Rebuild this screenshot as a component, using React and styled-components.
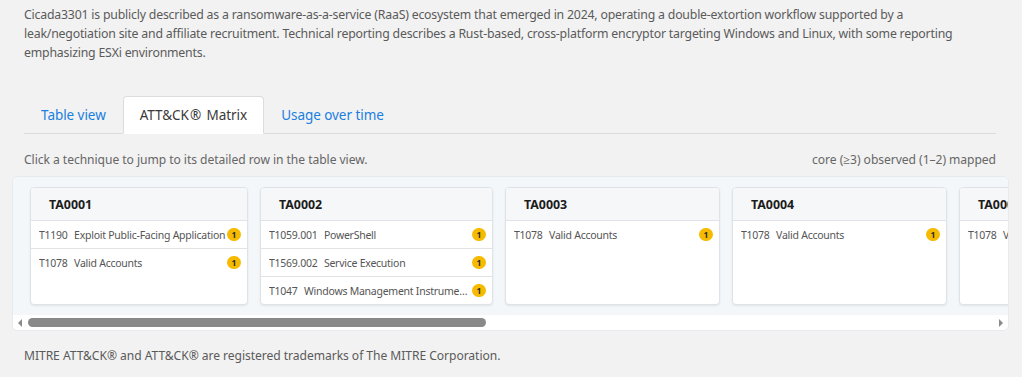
import React from 'react';
import styled, { createGlobalStyle } from 'styled-components';

const GlobalStyle = createGlobalStyle`
  html, body {
    margin: 0;
    padding: 0;
    background: #f2f2f2;
  }
  body {
    font-family: "Noto Sans", "Open Sans", sans-serif;
    color: #5b5b5b;
  }
`;

const Page = styled.div`
  padding: 5px 26px 0 24px;
  width: 1022px;
  box-sizing: border-box;
`;

const Intro = styled.p`
  margin: 0;
  font-size: 12.3px;
  letter-spacing: -0.2px;
  line-height: 19px;
  color: #5a5a5a;
`;

const Tabs = styled.div`
  display: flex;
  margin-top: 34px;
  border-bottom: 1px solid #dcdcdc;
`;

const Tab = styled.button`
  height: 38px;
  padding: 0 16px;
  margin-bottom: -1px;
  font: inherit;
  font-size: 13.5px;
  letter-spacing: -0.05px;
  background: ${({ active }) => (active ? '#fff' : 'transparent')};
  color: ${({ active }) => (active ? '#3a3a3a' : '#1a7fe0')};
  border: 1px solid ${({ active }) => (active ? '#dcdcdc' : 'transparent')};
  border-bottom-color: ${({ active }) => (active ? '#fff' : 'transparent')};
  border-radius: 4px 4px 0 0;
  cursor: pointer;
`;

const Reg = styled.span`
  margin: 0 2px 0 1px;
`;

const HintRow = styled.div`
  display: flex;
  justify-content: space-between;
  align-items: center;
  height: 18px;
  margin-top: 16px;
  font-size: 12.1px;
  letter-spacing: -0.05px;
  color: #666;
`;

const Matrix = styled.div`
  margin: 8px -13px 0 -12px;
  background: #fff;
  border: 1px solid #e6e9ed;
  border-radius: 6px;
  overflow: hidden;
`;

const Track = styled.div`
  display: flex;
  gap: 12px;
  padding: 10px 0 10px 17px;
  background: #f4f7fa;
  overflow: hidden;
`;

const Card = styled.div`
  flex: 0 0 ${({ width }) => width}px;
  background: #fff;
  border: 1px solid #dfe3e8;
  border-radius: 4px;
  box-shadow: 0 1px 2px rgba(0, 0, 0, 0.08);
  min-height: 113px;
  overflow: hidden;
`;

const CardHead = styled.div`
  height: 32px;
  display: flex;
  align-items: center;
  padding-left: 18px;
  background: #f5f7f9;
  border-bottom: 1px solid #dfe3e8;
  font-size: 12.4px;
  font-weight: 700;
  color: #1c1c1c;
`;

const Row = styled.div`
  display: flex;
  align-items: center;
  height: 27px;
  padding: 0 6px 0 8px;
  font-size: 10.5px;
  letter-spacing: -0.25px;
  color: #555;
  cursor: pointer;
  & + & {
    border-top: 1px solid #e3e3e3;
  }
`;

const RowText = styled.span`
  flex: 1;
  min-width: 0;
  white-space: nowrap;
  overflow: hidden;
  text-overflow: ${({ clip }) => (clip ? 'clip' : 'ellipsis')};
`;

const Code = styled.span`
  margin-right: 4px;
`;

const Badge = styled.span`
  flex: none;
  width: 14px;
  height: 13px;
  border-radius: 7px;
  background: #f6bb00;
  color: #2a2a2a;
  font-size: 8.5px;
  font-weight: 700;
  letter-spacing: 0;
  display: flex;
  align-items: center;
  justify-content: center;
  margin-left: 1px;
`;

const Scrollbar = styled.div`
  display: flex;
  align-items: center;
  height: 15px;
  padding: 0 3px;
  background: #fff;
`;

const ScrollTrack = styled.div`
  flex: 1;
  padding: 0 4px;
`;

const Thumb = styled.div`
  height: 9px;
  border-radius: 5px;
  background: #898989;
`;

const Arrow = styled.svg`
  width: 8px;
  height: 8px;
  flex: none;
`;

const Footer = styled.div`
  margin-top: 16px;
  font-size: 12.1px;
  letter-spacing: -0.05px;
  color: #5a5a5a;
`;

const columns = [
  {
    id: 'TA0001',
    width: 216,
    clip: true,
    rows: [
      ['T1190', 'Exploit Public-Facing Application'],
      ['T1078', 'Valid Accounts'],
    ],
  },
  {
    id: 'TA0002',
    width: 231,
    rows: [
      ['T1059.001', 'PowerShell'],
      ['T1569.002', 'Service Execution'],
      ['T1047', 'Windows Management Instrumentation'],
    ],
  },
  { id: 'TA0003', width: 213, rows: [['T1078', 'Valid Accounts']] },
  { id: 'TA0004', width: 213, rows: [['T1078', 'Valid Accounts']] },
  { id: 'TA0005', width: 213, rows: [['T1078', 'Valid Accounts']] },
  { id: 'TA0006', width: 213, rows: [['T1078', 'Valid Accounts']] },
];

const App = () => (
  <Page>
    <GlobalStyle />
    <Intro>
      Cicada3301 is publicly described as a ransomware-as-a-service (RaaS) ecosystem that emerged in 2024,
      operating a double-extortion workflow supported by a leak/negotiation site and affiliate recruitment.
      Technical reporting describes a Rust-based, cross-platform encryptor targeting Windows and Linux, with
      some reporting emphasizing ESXi environments.
    </Intro>
    <Tabs>
      <Tab>Table view</Tab>
      <Tab active>ATT&amp;CK<Reg>®</Reg> Matrix</Tab>
      <Tab>Usage over time</Tab>
    </Tabs>
    <HintRow>
      <span>Click a technique to jump to its detailed row in the table view.</span>
      <span>core (≥3) observed (1–2) mapped</span>
    </HintRow>
    <Matrix>
      <Track>
        {columns.map((col) => (
          <Card key={col.id} width={col.width}>
            <CardHead>{col.id}</CardHead>
            {col.rows.map(([code, name]) => (
              <Row key={code}>
                <RowText clip={col.clip}>
                  <Code>{code}</Code> {name}
                </RowText>
                <Badge>1</Badge>
              </Row>
            ))}
          </Card>
        ))}
      </Track>
      <Scrollbar>
        <Arrow viewBox="0 0 8 8">
          <path d="M6 0 L2 4 L6 8 Z" fill="#8a8a8a" />
        </Arrow>
        <ScrollTrack>
          <Thumb style={{ width: `${(458 / 964) * 100}%` }} />
        </ScrollTrack>
        <Arrow viewBox="0 0 8 8">
          <path d="M2 0 L6 4 L2 8 Z" fill="#8a8a8a" />
        </Arrow>
      </Scrollbar>
    </Matrix>
    <Footer>MITRE ATT&amp;CK® and ATT&amp;CK® are registered trademarks of The MITRE Corporation.</Footer>
  </Page>
);

export default App;
